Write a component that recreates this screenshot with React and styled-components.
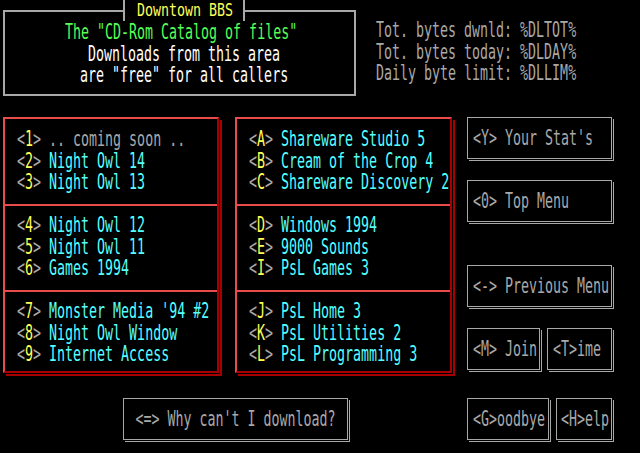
import React from 'react'
import styled, { createGlobalStyle } from 'styled-components'

const GRAY = '#a8a8a8'
const CYAN = '#55ffff'
const YELLOW = '#ffff55'
const GREEN = '#55ff55'
const RED = '#e84c4c'
const DARKRED = '#a80000'

const GlobalStyle = createGlobalStyle`
    html, body {
        margin: 0;
        background: #000;
    }
    body {
        font-family: "DejaVu Sans Mono", "Liberation Mono", monospace;
        font-size: 13.3px;
    }
`

const Screen = styled.div`
    width: 640px;
    height: 453px;
    padding-left: 3px;
    box-sizing: border-box;
    overflow: hidden;
    background: #000;
`

const TopRow = styled.div`
    display: flex;
    align-items: flex-start;
`

// one text row of the 80 column screen, stretched to look like the VGA font
const Line = styled.div`
    height: 21.5px;
    line-height: 21.5px;
    white-space: pre;
    color: ${p => p.color || GRAY};
    padding-left: ${p => p.indent || 0}px;
    transform: scaleY(1.55);
`

const HeaderBox = styled.div`
    position: relative;
    margin-top: 10px;
    width: 353px;
    height: 86px;
    box-sizing: border-box;
    border: 2px solid ${GRAY};
    padding-top: 10px;
`

const TitleTab = styled.div`
    position: absolute;
    top: -12px;
    left: 118px;
    width: 122px;
    height: 21px;
    box-sizing: border-box;
    border-left: 2px solid ${GRAY};
    border-right: 2px solid ${GRAY};
    background: #000;
    display: flex;
    align-items: center;
    justify-content: center;
    padding-left: 2px;
`

const Title = styled.div`
    height: 12px;
    line-height: 12px;
    color: ${YELLOW};
    white-space: pre;
    transform: scaleY(1.3);
`

const Stats = styled.div`
    margin-left: 20px;
    padding-top: 20px;
`

const Lower = styled.div`
    display: grid;
    grid-template-columns: 232px 232px 1fr;
    grid-template-rows: 260px 44px;
    row-gap: 21px;
    margin-top: 21px;
`

const MenuBox = styled.div`
    width: ${p => p.w}px;
    height: 256px;
    box-sizing: border-box;
    border: 2px solid;
    border-color: ${RED} ${DARKRED} ${DARKRED} ${RED};
    box-shadow: 1px 1px 0 #000, 3px 3px 0 ${DARKRED};
    display: flex;
    flex-direction: column;
`

const Section = styled.div`
    height: ${p => p.h}px;
    padding: ${p => p.top}px 0 0 12px;
    box-sizing: border-box;
    & + & {
        border-top: 2px solid ${RED};
    }
`

const Br = styled.span`
    color: ${GRAY};
`

const Key = styled.span`
    color: ${YELLOW};
`

const Label = styled.span`
    color: ${p => (p.dim ? GRAY : CYAN)};
`

const ButtonCol = styled.div`
    display: flex;
    flex-direction: column;
`

const ButtonRow = styled.div`
    display: flex;
    gap: 7px;
    margin-top: ${p => p.mt || 0}px;
`

const Btn = styled.div`
    width: ${p => p.w}px;
    height: 42px;
    margin-top: ${p => p.mt || 0}px;
    margin-left: ${p => p.ml || 0}px;
    box-sizing: border-box;
    border: 1px solid ${GRAY};
    box-shadow: 1px 1px 0 #000, 2px 2px 0 ${GRAY};
    display: flex;
    align-items: center;
    justify-content: ${p => (p.center ? 'center' : 'flex-start')};
    padding-left: ${p => (p.center ? 0 : p.pl ?? 5)}px;
    padding-top: 2px;
    color: ${GRAY};
`

const leftMenu = [
    [['1', '.. coming soon ..', true], ['2', 'Night Owl 14'], ['3', 'Night Owl 13']],
    [['4', 'Night Owl 12'], ['5', 'Night Owl 11'], ['6', 'Games 1994']],
    [['7', "Monster Media '94 #2"], ['8', 'Night Owl Window'], ['9', 'Internet Access']],
]

const midMenu = [
    [['A', 'Shareware Studio 5'], ['B', 'Cream of the Crop 4'], ['C', 'Shareware Discovery 2']],
    [['D', 'Windows 1994'], ['E', '9000 Sounds'], ['I', 'PsL Games 3']],
    [['J', 'PsL Home 3'], ['K', 'PsL Utilities 2'], ['L', 'PsL Programming 3']],
]

const sections = [
    { h: 85, top: 10 },
    { h: 86, top: 9 },
    { h: 81, top: 9 },
]

const Menu = ({ groups, w }) => (
    <MenuBox w={w}>
        {groups.map((rows, i) => (
            <Section key={i} h={sections[i].h} top={sections[i].top}>
                {rows.map(([k, label, dim]) => (
                    <Line key={k}>
                        <Br>&lt;</Br><Key>{k}</Key><Br>&gt;</Br> <Label dim={dim}>{label}</Label>
                    </Line>
                ))}
            </Section>
        ))}
    </MenuBox>
)

const App = () => {
    return (
        <Screen>
            <GlobalStyle />
            <TopRow>
                <HeaderBox>
                    <TitleTab>
                        <Title>Downtown BBS</Title>
                    </TitleTab>
                    <Line color={GREEN} indent={60}>The "CD-Rom Catalog of files"</Line>
                    <Line color="#fff" indent={83}>Downloads from this area</Line>
                    <Line color="#fff" indent={75}>are "free" for all callers</Line>
                </HeaderBox>
                <Stats>
                    <Line>Tot. bytes dwnld: %DLTOT%</Line>
                    <Line>Tot. bytes today: %DLDAY%</Line>
                    <Line>Daily byte limit: %DLLIM%</Line>
                </Stats>
            </TopRow>

            <Lower>
                <Menu groups={leftMenu} w={216} />
                <Menu groups={midMenu} w={217} />
                <ButtonCol>
                    <Btn w={145}><Line>&lt;Y&gt; Your Stat's</Line></Btn>
                    <Btn w={145} mt={21}><Line>&lt;0&gt; Top Menu</Line></Btn>
                    <Btn w={145} mt={43}><Line>&lt;-&gt; Previous Menu</Line></Btn>
                    <ButtonRow mt={21}>
                        <Btn w={73}><Line>&lt;M&gt; Join</Line></Btn>
                        <Btn w={65}><Line>&lt;T&gt;ime</Line></Btn>
                    </ButtonRow>
                </ButtonCol>

                <div style={{ gridColumn: '1 / span 2' }}>
                    <Btn w={225} ml={120} center><Line>&lt;=&gt; Why can't I download?</Line></Btn>
                </div>
                <ButtonRow>
                    <Btn w={82}><Line>&lt;G&gt;oodbye</Line></Btn>
                    <Btn w={56} pl={4}><Line>&lt;H&gt;elp</Line></Btn>
                </ButtonRow>
            </Lower>
        </Screen>
    )
}

export default App
